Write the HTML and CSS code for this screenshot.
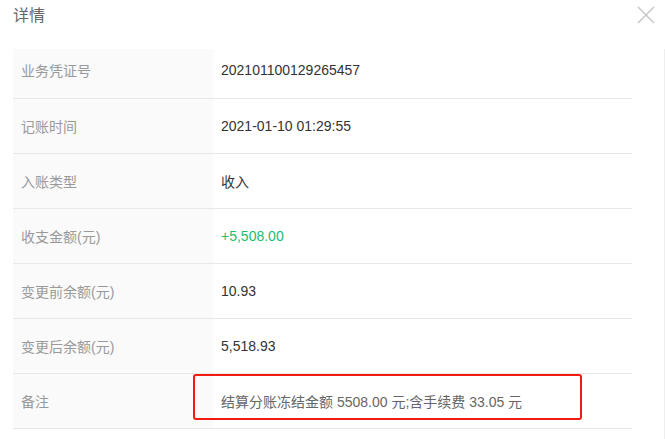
FILE: index.html
```html
<!DOCTYPE html>
<html lang="zh-CN">
<head>
<meta charset="utf-8">
<link rel="stylesheet" href="styles.css">
</head>
<body>
<div class="dialog">
  <div class="header">
    <span class="title">详情</span>
    <svg class="close" width="18" height="18" viewBox="0 0 18 18"><path d="M1 1L17 17M17 1L1 17" stroke="#c8c8c8" stroke-width="1.6" fill="none"/></svg>
  </div>
  <div class="body">
    <div class="scroll">
      <table class="detail">
        <tr><td class="label">业务凭证号</td><td class="value">202101100129265457</td></tr>
        <tr><td class="label">记账时间</td><td class="value">2021-01-10 01:29:55</td></tr>
        <tr><td class="label">入账类型</td><td class="value">收入</td></tr>
        <tr><td class="label">收支金额(元)</td><td class="value green">+5,508.00</td></tr>
        <tr><td class="label">变更前余额(元)</td><td class="value">10.93</td></tr>
        <tr><td class="label">变更后余额(元)</td><td class="value">5,518.93</td></tr>
        <tr><td class="label">备注</td><td class="value remark"><span class="mark">结算分账冻结金额 5508.00 元;含手续费 33.05 元</span></td></tr>
      </table>
    </div>
    <div class="bar"></div>
  </div>
</div>
</body>
</html>
```
FILE: styles.css
```css
html, body {
  margin: 0;
  padding: 0;
  background: #fff;
}
body {
  font-family: "Liberation Sans", "Noto Sans CJK SC", sans-serif;
  font-size: 14px;
  color: #333;
}
.dialog {
  width: 665px;
  height: 439px;
  overflow: hidden;
}
.header {
  height: 49px;
  display: flex;
  justify-content: space-between;
  align-items: flex-start;
  padding: 0 10px 0 13px;
  box-sizing: border-box;
}
.title {
  font-size: 16px;
  color: #666;
  line-height: 20px;
  margin-top: 6px;
}
.close {
  margin-top: 6px;
}
.body {
  display: flex;
  height: 390px;
}
.scroll {
  flex: 1;
  overflow: hidden;
  padding-left: 13px;
  padding-right: 32px;
}
.bar {
  width: 1px;
  background: #eeeeee;
}
.detail {
  width: 619px;
  border-collapse: collapse;
  margin-top: -6px;
}
.detail td {
  height: 55px;
  padding: 0 8px;
  border-bottom: 1px solid #e8e8e8;
  vertical-align: middle;
  box-sizing: border-box;
}
.label {
  width: 200px;
  background: #fafafa;
  color: #999;
}
.value {
  color: #333;
}
.green {
  color: #19be6b;
}
.remark {
  position: relative;
  color: #666;
}
.mark::after {
  content: "";
  position: absolute;
  left: -20px;
  top: 0;
  width: 389px;
  height: 46px;
  border: 2.5px solid #f41a10;
  border-radius: 3px;
  box-sizing: border-box;
}
```
